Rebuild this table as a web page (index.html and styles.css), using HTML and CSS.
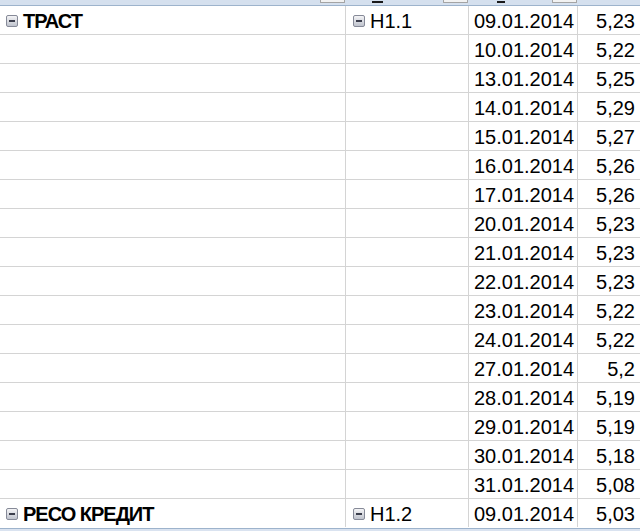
FILE: index.html
```html
<!DOCTYPE html>
<html lang="ru">
<head>
    <meta charset="UTF-8">
    <title>Нормативы банков</title>
    <link rel="stylesheet" href="styles.css">
</head>
<body>
    <div class="sheet">
        <!-- column header strip, only its bottom edge is visible -->
        <div class="head-row">
            <div class="head-cell"><span class="drop-btn"></span></div>
            <div class="head-cell"><span class="mark mark-bank"></span><span class="drop-btn"></span></div>
            <div class="head-cell"><span class="mark mark-date"></span><span class="drop-btn"></span></div>
            <div class="head-cell"></div>
        </div>

        <div class="row">
            <div class="cell bank"><span class="toggle"></span>ТРАСТ</div>
            <div class="cell norm"><span class="toggle"></span>Н1.1</div>
            <div class="cell date">09.01.2014</div>
            <div class="cell value">5,23</div>
        </div>
        <div class="row"><div class="cell bank"></div><div class="cell norm"></div><div class="cell date">10.01.2014</div><div class="cell value">5,22</div></div>
        <div class="row"><div class="cell bank"></div><div class="cell norm"></div><div class="cell date">13.01.2014</div><div class="cell value">5,25</div></div>
        <div class="row"><div class="cell bank"></div><div class="cell norm"></div><div class="cell date">14.01.2014</div><div class="cell value">5,29</div></div>
        <div class="row"><div class="cell bank"></div><div class="cell norm"></div><div class="cell date">15.01.2014</div><div class="cell value">5,27</div></div>
        <div class="row"><div class="cell bank"></div><div class="cell norm"></div><div class="cell date">16.01.2014</div><div class="cell value">5,26</div></div>
        <div class="row"><div class="cell bank"></div><div class="cell norm"></div><div class="cell date">17.01.2014</div><div class="cell value">5,26</div></div>
        <div class="row"><div class="cell bank"></div><div class="cell norm"></div><div class="cell date">20.01.2014</div><div class="cell value">5,23</div></div>
        <div class="row"><div class="cell bank"></div><div class="cell norm"></div><div class="cell date">21.01.2014</div><div class="cell value">5,23</div></div>
        <div class="row"><div class="cell bank"></div><div class="cell norm"></div><div class="cell date">22.01.2014</div><div class="cell value">5,23</div></div>
        <div class="row"><div class="cell bank"></div><div class="cell norm"></div><div class="cell date">23.01.2014</div><div class="cell value">5,22</div></div>
        <div class="row"><div class="cell bank"></div><div class="cell norm"></div><div class="cell date">24.01.2014</div><div class="cell value">5,22</div></div>
        <div class="row"><div class="cell bank"></div><div class="cell norm"></div><div class="cell date">27.01.2014</div><div class="cell value">5,2</div></div>
        <div class="row"><div class="cell bank"></div><div class="cell norm"></div><div class="cell date">28.01.2014</div><div class="cell value">5,19</div></div>
        <div class="row"><div class="cell bank"></div><div class="cell norm"></div><div class="cell date">29.01.2014</div><div class="cell value">5,19</div></div>
        <div class="row"><div class="cell bank"></div><div class="cell norm"></div><div class="cell date">30.01.2014</div><div class="cell value">5,18</div></div>
        <div class="row"><div class="cell bank"></div><div class="cell norm"></div><div class="cell date">31.01.2014</div><div class="cell value">5,08</div></div>

        <div class="row last">
            <div class="cell bank"><span class="toggle"></span>РЕСО КРЕДИТ</div>
            <div class="cell norm"><span class="toggle"></span>Н1.2</div>
            <div class="cell date">09.01.2014</div>
            <div class="cell value">5,03</div>
        </div>

        <div class="foot-strip"></div>
    </div>
</body>
</html>
```

FILE: styles.css
```css
body {
    margin: 0;
    background: #fff;
    overflow: hidden;
    font-family: "Liberation Sans", Arial, sans-serif;
    color: #000;
}
.sheet {
    width: 640px;
}
.head-row,
.row {
    display: grid;
    grid-template-columns: 346px 123px 109px 62px;
}
.head-row {
    height: 5px;
    background: #d5e0ee;
    border-bottom: 1px solid #9db3cc;
}
.head-cell {
    display: flex;
    justify-content: flex-end;
    align-items: flex-start;
    position: relative;
}
.drop-btn {
    width: 23px;
    height: 2px;
    background: #f2f2f2;
    border: 1px solid #a4a4a4;
    border-top: none;
    border-radius: 0 0 1px 1px;
    margin-right: 1px;
}
.mark {
    position: absolute;
    top: 1px;
    height: 2px;
    background: #1a1a1a;
}
.mark-bank {
    left: 26px;
    width: 11px;
}
.mark-date {
    left: 28px;
    width: 8px;
}
.row {
    height: 29px;
}
.cell {
    box-sizing: border-box;
    height: 29px;
    border-bottom: 1px solid #d4d4d4;
    border-right: 1px solid #d4d4d4;
    font-size: 20px;
    line-height: 30px;
    white-space: nowrap;
    display: flex;
    align-items: flex-start;
}
.row.last .cell {
    border-bottom: none;
    height: 28px;
}
.bank {
    padding-left: 6px;
    font-weight: bold;
    letter-spacing: -1px;
}
.norm {
    padding-left: 7px;
}
.date {
    padding-left: 5px;
}
.value {
    border-right: none;
    justify-content: flex-end;
    padding-right: 5px;
}
.toggle {
    position: relative;
    flex: none;
    box-sizing: border-box;
    width: 12px;
    height: 12px;
    margin-top: 9px;
    margin-right: 5px;
    border: 1px solid #868a98;
    border-radius: 2px;
    background: linear-gradient(#f4f4f6, #bfc3cd);
    letter-spacing: 0;
}
.toggle::after {
    content: "";
    position: absolute;
    left: 2px;
    right: 2px;
    top: 4px;
    height: 2px;
    background: #3b3e4c;
}
.foot-strip {
    height: 4px;
    border-top: 1px solid #9db3cc;
    background: #dae3f0;
}
```
